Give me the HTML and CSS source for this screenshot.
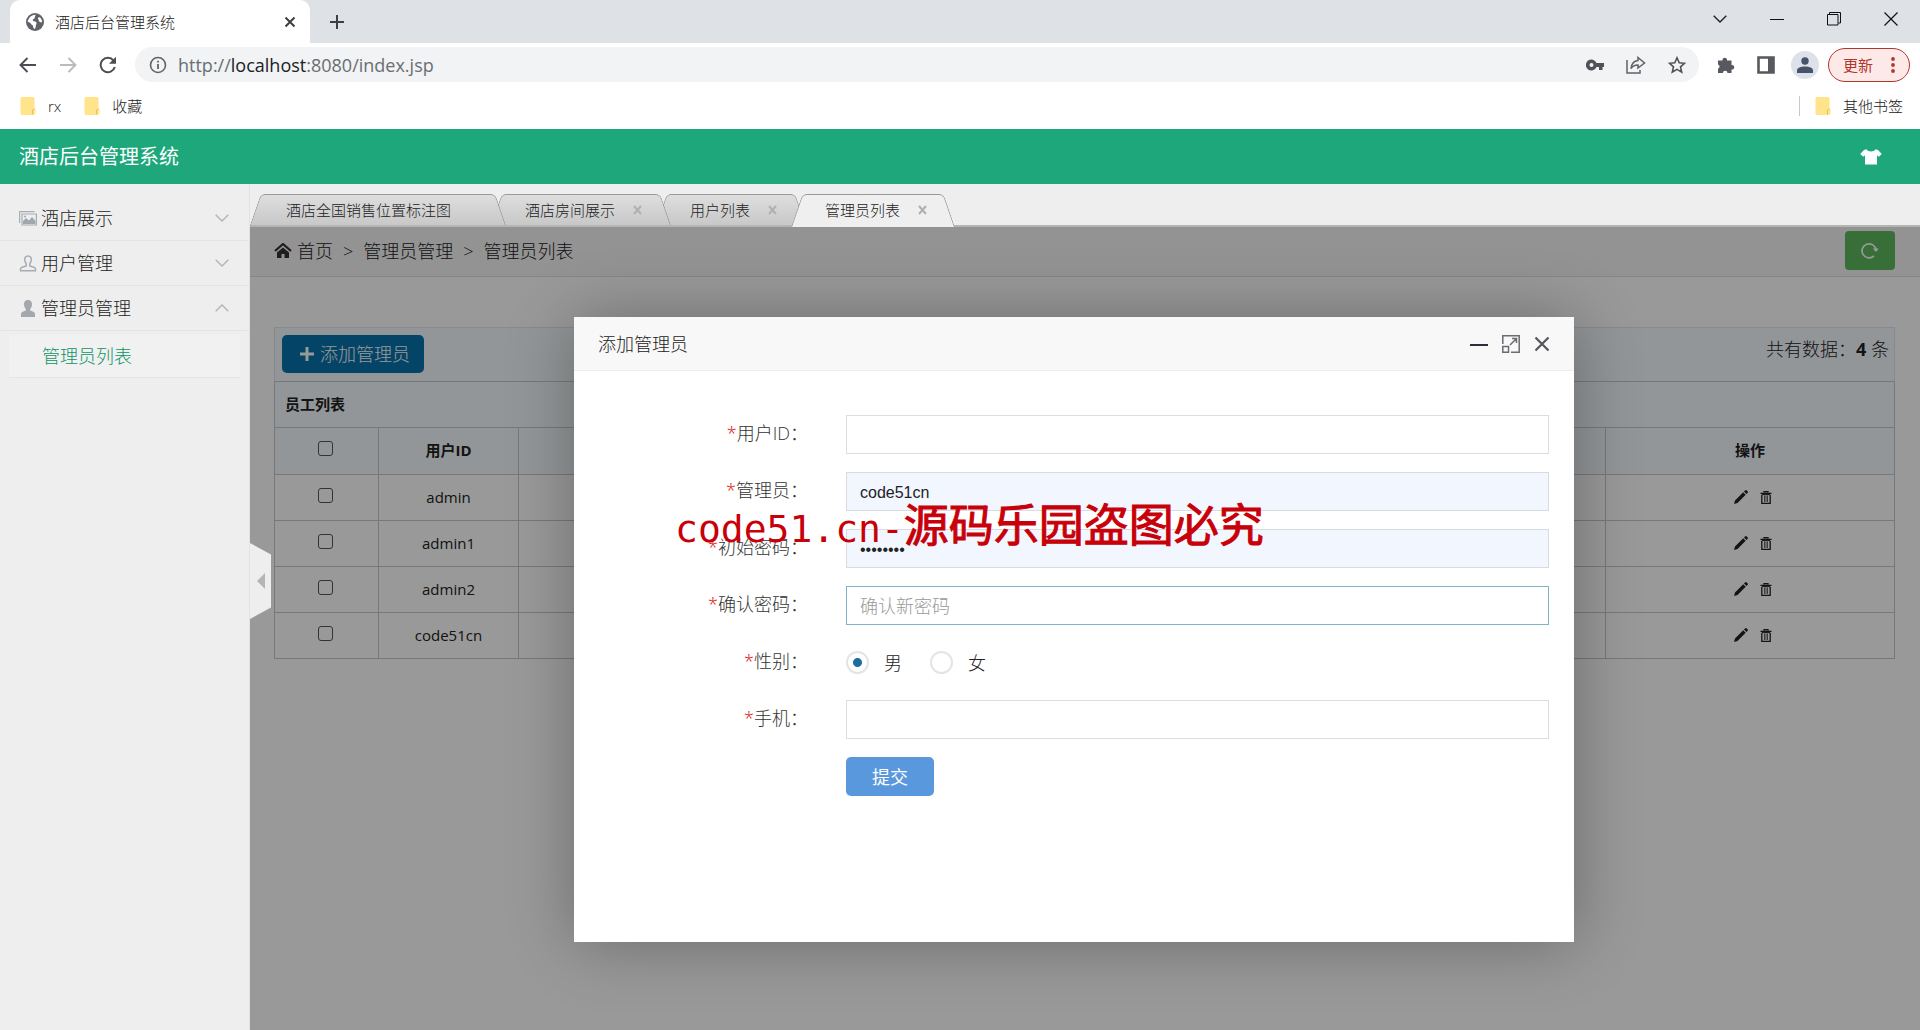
FILE: index.html
```html
<!DOCTYPE html>
<html lang="zh-CN">
<head>
<meta charset="utf-8">
<title>酒店后台管理系统</title>
<link rel="stylesheet" href="styles.css">
</head>
<body>
<svg class="defs" aria-hidden="true">
  <symbol id="folder" viewBox="0 0 16 18"><path d="M2 0h11a1.500 1.500 0 0 1 1.500 1.500v10.500h1v4a2 2 0 0 1-2 2H2a1.500 1.500 0 0 1-1.500-1.500v-15A1.500 1.500 0 0 1 2 0z" fill="#ffe48c"/><path d="M12.500 17.500v-3.500a2 2 0 0 1 2-2" fill="none" stroke="#e8c04c"/></symbol>
  <symbol id="chevron" viewBox="0 0 14 8"><path d="M.7.7 7 7 13.300.7" fill="none" stroke="currentColor" stroke-width="1.400"/></symbol>
  <symbol id="pencil" viewBox="0 0 14 14"><path d="M0 14l1-3.500L9.200 2.300l2.500 2.500L3.500 13zM10 1.500l1-1a1.300 1.300 0 0 1 1.800 0l.7.7a1.300 1.300 0 0 1 0 1.800l-1 1z" fill="currentColor"/></symbol>
  <symbol id="trash" viewBox="0 0 12 13"><path d="M4 1.600V.7h4v.9M.5 2.300h11M1.800 4v8.300h8.400V4" fill="none" stroke="currentColor" stroke-width="1.300"/><path d="M4.500 4.500v6.500M6 4.500v6.500M7.500 4.500v6.500" stroke="currentColor" stroke-width=".7"/><path d="M1.800 3.600h8.400" stroke="currentColor" stroke-width="1"/></symbol>
</svg>

<header class="browser">
  <div class="tabstrip">
    <div class="browser-tab">
      <svg width="18" height="18" viewBox="0 0 18 18"><circle cx="9" cy="9" r="9" fill="#5f6368"/><path d="M3 5.500C4.500 3 7 1.700 10 1.800 8.500 3 9.500 4 8.500 5.200 7 6 6.500 7 7 8c1.500.5 2.500 0 3.500 1.500.5 1.500-1 2.500-.8 4.500l-.8 2C7.500 15.500 7 14 7 12.500 5.500 12 5 10.500 3.500 9.500l-2-1C1.700 7.500 2.200 6.500 3 5.500zM13 4c2 .8 3 3 3.200 5-1.500.8-3 .2-3.500-1.500-.3-1 0-1.300-1-2z" fill="#fff"/></svg>
      <span class="browser-tab-title">酒店后台管理系统</span>
      <button class="plain" aria-label="关闭标签页"><svg width="12" height="12" viewBox="0 0 12 12"><path d="M1.500 1.500l9 9M10.500 1.500l-9 9" stroke="#3c4043" stroke-width="2"/></svg></button>
    </div>
    <button class="plain new-tab" aria-label="新标签页"><svg width="16" height="16" viewBox="0 0 16 16"><path d="M8 1v14M1 8h14" stroke="#3c4043" stroke-width="2"/></svg></button>
    <div class="window-buttons">
      <button class="plain" aria-label="搜索标签页"><svg width="14" height="8"><use href="#chevron"/></svg></button>
      <button class="plain" aria-label="最小化"><svg width="14" height="14" viewBox="0 0 14 14"><path d="M0 7.500h14" stroke="#111"/></svg></button>
      <button class="plain" aria-label="还原"><svg width="14" height="14" viewBox="0 0 14 14"><path d="M.5 2.500h10.500v10.500H.5zM2.500 2.500v-2h11v10.500h-2" fill="none" stroke="#111"/></svg></button>
      <button class="plain" aria-label="关闭"><svg width="14" height="14" viewBox="0 0 14 14"><path d="M.5.5l13 13M13.500.5l-13 13" stroke="#111" stroke-width="1.200"/></svg></button>
    </div>
  </div>
  <div class="toolbar">
    <button class="plain" aria-label="后退"><svg width="18" height="16" viewBox="0 0 18 16"><path d="M17 8H2M8.500 1L1.500 8l7 7" fill="none" stroke="#4a4d51" stroke-width="1.900"/></svg></button>
    <button class="plain" aria-label="前进"><svg width="18" height="16" viewBox="0 0 18 16"><path d="M1 8h15M9.500 1l7 7-7 7" fill="none" stroke="#b9bbbd" stroke-width="1.900"/></svg></button>
    <button class="plain" aria-label="重新加载"><svg width="18" height="18" viewBox="0 0 18 18"><path d="M15.800 11A7.200 7.200 0 1 1 14.500 4.500" fill="none" stroke="#4a4d51" stroke-width="2"/><path d="M17 .8v7h-7z" fill="#4a4d51"/></svg></button>
    <div class="omnibox">
      <svg width="18" height="18" viewBox="0 0 18 18"><circle cx="9" cy="9" r="7.500" fill="none" stroke="#5f6368" stroke-width="1.600"/><path d="M9 8v5M9 4.800v1.800" stroke="#5f6368" stroke-width="1.800"/></svg>
      <span class="url">http://<b>localhost</b>:8080/index.jsp</span>
      <svg width="18" height="12" viewBox="0 0 18 12"><path fill="#4f5257" fill-rule="evenodd" d="M10.500 4A5.500 5.500 0 1 0 10.500 8H13v3h3.500V8H18V4zM5.500 4a2 2 0 1 1 0 4 2 2 0 0 1 0-4z"/></svg>
      <svg width="20" height="18" viewBox="0 0 20 18"><path d="M1 4v13h13v-3" fill="none" stroke="#5f6368" stroke-width="1.500"/><path d="M12 1.500l6.500 5.500-6.500 5V9C8.500 9 6.500 10 5 12.500 5.500 8 8 5 12 4.500z" fill="none" stroke="#5f6368" stroke-width="1.500"/></svg>
      <svg width="18" height="18" viewBox="0 0 18 18"><path d="M9 1.800l2.200 5 5.300.5-4 3.600 1.200 5.300L9 13.400l-4.700 2.800 1.200-5.300-4-3.600 5.300-.5z" fill="none" stroke="#4f5257" stroke-width="1.600"/></svg>
    </div>
    <button class="plain" aria-label="扩展程序"><svg width="18" height="18" viewBox="0 0 18 18"><path fill="#56595e" d="M1 4.500h4.500a2.300 2.300 0 1 1 4.500 0h4.500V9a2.300 2.300 0 1 1 0 4.500V17h-4a2.300 2.300 0 0 0-4.600 0H1v-4.300a2.200 2.200 0 0 0 0-4.200z"/></svg></button>
    <button class="plain" aria-label="侧边栏"><svg width="18" height="18" viewBox="0 0 18 18"><path d="M1.500 1.500h15v15h-15z" fill="none" stroke="#56595e" stroke-width="2.600"/><path d="M11 1h6v16h-6z" fill="#56595e"/></svg></button>
    <button class="plain avatar" aria-label="用户"><svg width="16" height="16" viewBox="0 0 16 16"><circle cx="8" cy="4" r="3.700" fill="#47536a"/><path d="M0 16v-2.500C0 10.500 4 9.500 8 9.500s8 1 8 4V16z" fill="#47536a"/></svg></button>
    <button class="update">更新<svg width="4" height="16" viewBox="0 0 4 16"><g fill="#b3362d"><circle cx="2" cy="2" r="1.900"/><circle cx="2" cy="8" r="1.900"/><circle cx="2" cy="14" r="1.900"/></g></svg></button>
  </div>
  <nav class="bookmarks">
    <a href="#"><svg width="16" height="18"><use href="#folder"/></svg>rx</a>
    <a href="#"><svg width="16" height="18"><use href="#folder"/></svg>收藏</a>
    <a href="#" class="other"><svg width="16" height="18"><use href="#folder"/></svg>其他书签</a>
  </nav>
</header>

<header class="app-header">
  <h1>酒店后台管理系统</h1>
  <button class="plain" aria-label="换肤"><svg width="22" height="16" viewBox="0 0 22 16"><path fill="#fff" d="M6.500.3C8 3.300 14 3.300 15.500.3L18 1l3.800 4-3 2.800-1.800-1.500V15.500H5V6.300L3.200 7.800.2 5 4 1z"/></svg></button>
</header>

<div class="app">
  <aside class="sidebar">
    <button class="menu"><svg width="18" height="15" viewBox="0 0 18 15"><g fill="none" stroke="#a8adb3" stroke-width="1.200"><path d="M.6 12V.7h15M3 3h14.400v11H3z"/></g><path d="M4 13V10l3-3 3 2.500L13 6l3.500 4v3z" fill="#a0a6ae"/><circle cx="6" cy="5.500" r="1" fill="#a0a6ae"/></svg>酒店展示<svg class="arrow" width="14" height="8"><use href="#chevron"/></svg></button>
    <button class="menu"><svg width="18" height="17" viewBox="0 0 18 17"><path d="M9 1C6.500 1 5.500 3 5.700 5c.2 2 1 3 1.500 3.800V11L2.500 12.500C1.500 13 1.300 14.500 1.500 15.800h15c.2-1.300 0-2.800-1-3.300L10.800 11V8.800c.5-.8 1.300-1.800 1.500-3.800C12.500 3 11.500 1 9 1z" fill="none" stroke="#a8adb3" stroke-width="1.500"/></svg>用户管理<svg class="arrow" width="14" height="8"><use href="#chevron"/></svg></button>
    <button class="menu open"><svg width="18" height="17" viewBox="0 0 18 17"><path d="M9 0C6 0 4.800 2.200 5 4.800c.2 2.500 1 3.400 1.800 4.200v1.500L3 12c-1 .5-1.200 3-1 5h14c.2-2 0-4.500-1-5l-3.800-1.500V9c.8-.8 1.600-1.700 1.800-4.200C13.200 2.200 12 0 9 0z" fill="#a3a8ae"/></svg>管理员管理<svg class="arrow" width="14" height="8"><use href="#chevron"/></svg></button>
    <a href="#" class="submenu">管理员列表</a>
  </aside>

  <main class="main">
    <nav class="page-tabs">
      <a href="#" class="page-tab home">酒店全国销售位置标注图</a>
      <a href="#" class="page-tab second">酒店房间展示<svg width="12" height="12" viewBox="0 0 12 12"><path d="M2 2l7 8M9 2l-7 8"/></svg></a>
      <a href="#" class="page-tab">用户列表<svg width="12" height="12" viewBox="0 0 12 12"><path d="M2 2l7 8M9 2l-7 8"/></svg></a>
      <a href="#" class="page-tab active">管理员列表<svg width="12" height="12" viewBox="0 0 12 12"><path d="M2 2l7 8M9 2l-7 8"/></svg></a>
    </nav>

    <section class="frame">
      <div class="crumbs">
        <svg width="18" height="15" viewBox="0 0 18 15"><path d="M1 8l8-7 8 7" fill="none" stroke="#333" stroke-width="2.200"/><path d="M3 9.500l6-5 6 5V15h-4.500v-4h-3v4H3z" fill="#333"/></svg>
        <a href="#">首页</a><span>&gt;</span><span>管理员管理</span><span>&gt;</span><span>管理员列表</span>
        <button class="refresh" aria-label="刷新"><svg width="18" height="17" viewBox="0 0 18 17"><path d="M13 13.800A7 7 0 1 1 15 8" fill="none" stroke="#fff" stroke-width="1.700"/><path d="M11.800 6.500h6L15 10z" fill="#fff"/></svg></button>
      </div>
      <div class="content">
        <div class="table-bar">
          <button class="add"><svg width="14" height="14" viewBox="0 0 14 14"><path d="M7 0v14M0 7h14" stroke="#fff" stroke-width="3"/></svg>添加管理员</button>
          <p>共有数据：<strong>4</strong> 条</p>
        </div>
        <table class="users">
          <colgroup><col class="c-check"><col class="c-id"><col><col class="c-ops"></colgroup>
          <thead>
            <tr><th colspan="4" class="caption">员工列表</th></tr>
            <tr><th><input type="checkbox" aria-label="全选"></th><th>用户ID</th><th></th><th>操作</th></tr>
          </thead>
          <tbody>
            <tr><td><input type="checkbox" aria-label="admin"></td><td>admin</td><td></td><td class="ops"><a href="#" aria-label="编辑"><svg width="14" height="14"><use href="#pencil"/></svg></a><a href="#" aria-label="删除"><svg width="12" height="13"><use href="#trash"/></svg></a></td></tr>
            <tr><td><input type="checkbox" aria-label="admin1"></td><td>admin1</td><td></td><td class="ops"><a href="#" aria-label="编辑"><svg width="14" height="14"><use href="#pencil"/></svg></a><a href="#" aria-label="删除"><svg width="12" height="13"><use href="#trash"/></svg></a></td></tr>
            <tr><td><input type="checkbox" aria-label="admin2"></td><td>admin2</td><td></td><td class="ops"><a href="#" aria-label="编辑"><svg width="14" height="14"><use href="#pencil"/></svg></a><a href="#" aria-label="删除"><svg width="12" height="13"><use href="#trash"/></svg></a></td></tr>
            <tr><td><input type="checkbox" aria-label="code51cn"></td><td>code51cn</td><td></td><td class="ops"><a href="#" aria-label="编辑"><svg width="14" height="14"><use href="#pencil"/></svg></a><a href="#" aria-label="删除"><svg width="12" height="13"><use href="#trash"/></svg></a></td></tr>
          </tbody>
        </table>
      </div>

      <div class="shade">
        <div class="dialog" role="dialog" aria-labelledby="dialog-title">
          <div class="dialog-head">
            <h2 id="dialog-title">添加管理员</h2>
            <button class="plain" aria-label="最小化"><svg width="18" height="18" viewBox="0 0 18 18"><path d="M0 10h18" stroke="#2e2d3c" stroke-width="2"/></svg></button>
            <button class="plain" aria-label="最大化"><svg width="18" height="18" viewBox="0 0 18 18"><g fill="none" stroke="#6b6b73" stroke-width="1.500"><path d="M.8 9V.8h16.400v16.400H9M.8 11.500h5.700v5.700H.8zM8 10l6-6M10 3.500h4.500V8"/></g></svg></button>
            <button class="plain" aria-label="关闭"><svg width="16" height="16" viewBox="0 0 16 16"><path d="M1.500 1.500l13 13M14.500 1.500l-13 13" stroke="#55555d" stroke-width="2.200"/></svg></button>
          </div>
          <form class="form">
            <label for="uid"><i>*</i>用户ID：</label><input class="field" id="uid" type="text">
            <label for="name"><i>*</i>管理员：</label><input class="field filled" id="name" type="text" value="code51cn">
            <label for="pwd"><i>*</i>初始密码：</label><input class="field filled" id="pwd" type="password" value="code51cn">
            <label for="pwd2"><i>*</i>确认密码：</label><input class="field current" id="pwd2" type="password" placeholder="确认新密码">
            <span class="label" id="sex"><i>*</i>性别：</span>
            <div class="radios" role="radiogroup" aria-labelledby="sex">
              <label><input type="radio" name="sex" checked>男</label>
              <label><input type="radio" name="sex">女</label>
            </div>
            <label for="tel"><i>*</i>手机：</label><input class="field" id="tel" type="text">
            <button type="button" class="submit">提交</button>
          </form>
          <p class="watermark"><span>code51.cn-</span>源码乐园盗图必究</p>
        </div>
      </div>
      <button class="plain collapse" aria-label="收起侧栏"><svg width="8" height="16" viewBox="0 0 8 16"><path d="M8 0v16L0 8z" fill="#b5b5b5"/></svg></button>
    </section>
  </main>
</div>
</body>
</html>
```
FILE: styles.css
```css
* { box-sizing: border-box; }

body {
  margin: 0;
  min-height: 100vh;
  display: flex;
  flex-direction: column;
  font: 300 18px/24px "Open Sans", "Noto Sans CJK SC", sans-serif;
  color: #222;
  background: #eee;
}

a { color: inherit; text-decoration: none; }
svg { display: block; flex: none; }
button, input { font: inherit; color: inherit; }
h1, h2, p { margin: 0; font-weight: 300; }
.defs { position: absolute; width: 0; height: 0; }

.plain {
  border: 0;
  padding: 0;
  background: none;
  display: grid;
  place-items: center;
}

/* Browser chrome */
.browser { background: #fff; font-size: 15px; }

.tabstrip {
  display: flex;
  height: 43px;
  padding-left: 10px;
  background: #dee1e6;
}

.browser-tab {
  display: flex;
  align-items: center;
  gap: 11px;
  width: 300px;
  padding: 0 14px 0 16px;
  border-radius: 10px 10px 0 0;
  background: #fff;
}

.browser-tab-title { flex: 1; }
.new-tab { width: 54px; }

.window-buttons {
  display: flex;
  align-items: center;
  gap: 43px;
  height: 37px;
  margin-left: auto;
  padding-right: 22px;
}

.toolbar {
  display: flex;
  align-items: center;
  gap: 22px;
  height: 45px;
  padding: 0 10px 2px 19px;
}

.omnibox {
  flex: 1;
  display: flex;
  align-items: center;
  gap: 22px;
  height: 35px;
  margin-left: -4px;
  padding: 0 13px 0 14px;
  border-radius: 18px;
  background: #f1f3f4;
}

.url { flex: 1; margin-left: -11px; font-size: 18px; font-weight: 400; color: #6a6e73; }
.url b { font-weight: 400; color: #202124; }
.omnibox + .plain { margin-left: -4px; }

.avatar {
  width: 28px;
  height: 28px;
  margin-left: -6px;
  margin-right: -13px;
  border-radius: 50%;
  background: #dde1e9;
}

.update {
  display: flex;
  align-items: center;
  gap: 18px;
  height: 34px;
  padding: 0 14px;
  border: 1px solid #b3362d;
  border-radius: 17px;
  background: #fce9e8;
  color: #b3362d;
  font-weight: 400;
}

.bookmarks {
  display: flex;
  align-items: center;
  gap: 23px;
  height: 41px;
  padding: 0 17px 6px 20px;
}

.bookmarks a { display: flex; align-items: center; gap: 12px; }
.bookmarks .other { margin-left: auto; padding-left: 15px; border-left: 1px solid #c6c8cb; line-height: 20px; }

/* Application header */
.app-header {
  display: flex;
  align-items: center;
  justify-content: space-between;
  height: 55px;
  padding: 0 38px 0 19px;
  background: #1da77a;
  color: #fff;
}

.app-header h1 { font-size: 20px; font-weight: 400; }

/* Layout */
.app { flex: 1; display: flex; }

.sidebar { width: 250px; padding-top: 12px; border-right: 1px solid #e2e2e2; }

.menu {
  display: flex;
  align-items: center;
  gap: 4px;
  width: 100%;
  height: 45px;
  padding: 0 20px 0 19px;
  border: 0;
  border-bottom: 1px solid #e4e4e4;
  background: none;
}

.arrow { margin-left: auto; color: #b4b4b4; }
.open .arrow { transform: rotate(180deg); }

.submenu {
  display: block;
  margin: 4px 9px;
  padding: 9px 33px;
  border-bottom: 1px solid #e4e4e4;
  background: #f1f1f1;
  color: #109468;
}

.main { flex: 1; min-width: 0; display: flex; flex-direction: column; }

.page-tabs {
  display: flex;
  align-items: flex-end;
  height: 43px;
  border-bottom: 2px solid #b4b4b4;
  font-size: 15px;
}

.page-tab {
  position: relative;
  z-index: 1;
  display: flex;
  align-items: center;
  gap: 17px;
  height: 31px;
  margin-left: -14px;
  padding: 0 26px 0 34px;
}

.page-tab path { stroke: #b0b0b0; stroke-width: 2; }
.page-tab.second { z-index: 2; }
.page-tab.home { z-index: 3; margin-left: 0; padding: 0 54px 0 36px; }

.page-tab::before,
.page-tab::after {
  content: "";
  position: absolute;
  z-index: -1;
  top: 0;
  bottom: 0;
  border: 0 solid #999;
  border-top-width: 1px;
  background: linear-gradient(#dedede, #c8c8c8);
}

.page-tab::before {
  left: 0;
  right: 50%;
  border-left-width: 1px;
  border-top-left-radius: 5px;
  transform: skewX(-19deg);
  transform-origin: bottom left;
}

.page-tab::after {
  left: 50%;
  right: 0;
  border-right-width: 1px;
  border-top-right-radius: 5px;
  transform: skewX(19deg);
  transform-origin: bottom right;
}

.page-tab.active { z-index: 4; height: 33px; margin-bottom: -2px; padding-bottom: 2px; }
.page-tab.active::before,
.page-tab.active::after { background: #efefef; }

.frame { position: relative; flex: 1; background: #fff; }

.crumbs {
  display: flex;
  align-items: center;
  gap: 10px;
  height: 50px;
  padding: 0 25px 2px 24px;
  border-bottom: 1px solid #e0e0e0;
  background: #f5f5f5;
}

.crumbs a { margin-left: -5px; }

.refresh {
  display: grid;
  place-items: center;
  width: 50px;
  height: 39px;
  margin-left: auto;
  border: 0;
  border-radius: 4px;
  background: #5eb95e;
}

.content { padding: 50px 25px 0 24px; }

.table-bar {
  display: flex;
  justify-content: space-between;
  padding: 7px 5px 8px 7px;
  border: 1px solid #e2e6ea;
  border-bottom: 0;
  background: #f5fafe;
}

.table-bar p { padding-top: 2px; }
.table-bar strong { font-weight: 700; }

.add {
  display: flex;
  align-items: center;
  gap: 6px;
  height: 38px;
  padding: 0 14px 0 18px;
  border: 0;
  border-radius: 5px;
  background: #0772ab;
  color: #fff;
}

.users {
  width: 100%;
  table-layout: fixed;
  border-collapse: collapse;
  font-size: 15px;
  font-weight: 400;
  text-align: center;
}

.c-check { width: 104px; }
.c-id { width: 140px; }
.c-ops { width: 289px; }

.users th, .users td { height: 46px; padding: 0 10px 2px; border: 1px solid #c8c8c8; }
.users thead { background: #f5fafe; }
.users th { height: 47px; font-weight: 700; }
.users .caption { height: 46px; text-align: left; }
.users .ops { padding: 0 4px 4px 10px; }
.users td a { display: inline-block; margin: 0 6px; vertical-align: middle; }

.users input {
  appearance: none;
  width: 15px;
  height: 15px;
  margin: 0 2px 0 0;
  border: 1px solid #555;
  border-radius: 3px;
}

/* Dialog */
.shade {
  position: absolute;
  inset: 0;
  display: flex;
  align-items: center;
  justify-content: center;
  padding: 2px 22px 0 0;
  background: rgba(0, 0, 0, .4);
}

.dialog {
  position: relative;
  width: 1000px;
  max-width: 94%;
  min-height: 625px;
  background: #fff;
  box-shadow: 1px 1px 62px rgba(0, 0, 0, .3);
}

.dialog-head {
  display: flex;
  align-items: center;
  gap: 14px;
  height: 54px;
  padding: 0 24px;
  border-bottom: 1px solid #eee;
  background: #f8f8f8;
}

.dialog-head h2 { flex: 1; font-size: 18px; }

.form {
  display: grid;
  grid-template-columns: 234px 1fr;
  align-items: center;
  gap: 18px 38px;
  padding: 44px 25px 0 0;
}

.form > label, .label { padding-bottom: 4px; text-align: right; color: #333; }
.form i { color: #d00; font-style: normal; }

.field {
  width: 100%;
  height: 39px;
  padding: 3px 13px 0;
  border: 1px solid #ddd;
  outline: 0;
  background: #fff;
  font-family: "Liberation Sans", "Noto Sans CJK SC", sans-serif;
  font-size: 16px;
  font-weight: 400;
}

.filled { background: #f2f7ff; border-color: #d8dce0; color: #222; }
.current { border-color: #7fb3c6; font-size: 18px; }
.field::placeholder { color: #999; font-weight: 300; }

.radios { display: flex; align-items: center; gap: 28px; height: 39px; }
.radios label { display: flex; align-items: center; gap: 15px; }

.radios input {
  appearance: none;
  width: 23px;
  height: 23px;
  margin: 0;
  border: 2px solid #e4e4e4;
  border-radius: 50%;
}

.radios input:checked { background: radial-gradient(circle, #1a6fa0 4px, #fff 5px); }

.submit {
  grid-column: 2;
  justify-self: start;
  width: 88px;
  height: 39px;
  border: 0;
  border-radius: 5px;
  background: #5a98de;
  color: #fff;
  font-weight: 400;
}

.watermark {
  position: absolute;
  top: 178px;
  left: 101px;
  font: 400 45px/56px "Noto Sans CJK SC", sans-serif;
  color: #c8000a;
  -webkit-text-stroke: 1px #c8000a;
  white-space: nowrap;
}

.watermark span { font-family: "DejaVu Sans Mono", monospace; font-size: 38px; -webkit-text-stroke: 0; }

.collapse {
  position: absolute;
  top: 316px;
  left: 0;
  width: 21px;
  height: 76px;
  background: #eee;
  clip-path: polygon(0 0, 100% 15%, 100% 85%, 0 100%);
}
```
